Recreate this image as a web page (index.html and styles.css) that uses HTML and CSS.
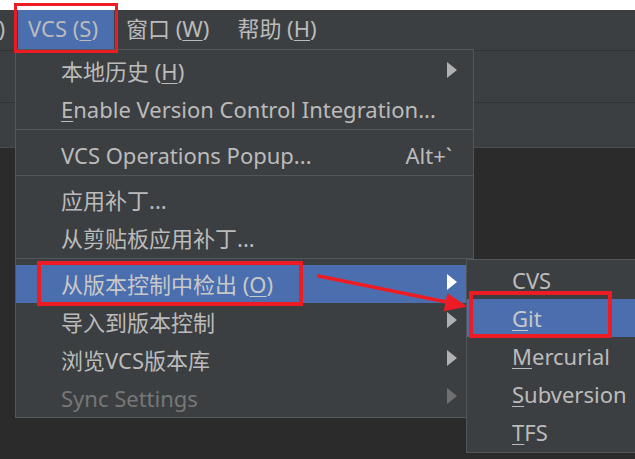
FILE: index.html
```html
<!DOCTYPE html>
<html lang="zh-CN">
<head>
<meta charset="utf-8">
<title>VCS menu</title>
<link rel="stylesheet" href="styles.css">
</head>
<body>
<div class="top-strip"></div>
<div class="menubar">
  <span class="mb-cut"><span>)</span></span>
  <span class="mb-item active">VCS (<u>S</u>)</span>
  <span class="mb-item">窗口 (<u>W</u>)</span>
  <span class="mb-item">帮助 (<u>H</u>)</span>
</div>
<div class="toolbar t1"></div>
<div class="toolbar t2"></div>
<div class="editor"></div>

<div class="popup main-menu">
  <div class="item"><span class="label">本地历史 (<u>H</u>)</span><svg class="tri" viewBox="0 0 10 16"><polygon points="0,0 10,8 0,16"/></svg></div>
  <div class="item"><span class="label"><u>E</u>nable Version Control Integration...</span></div>
  <div class="sep"></div>
  <div class="item"><span class="label">VCS Operations Popup...</span><span class="shortcut">Alt+`</span></div>
  <div class="sep"></div>
  <div class="item"><span class="label">应用补丁...</span></div>
  <div class="item"><span class="label">从剪贴板应用补丁...</span></div>
  <div class="sep"></div>
  <div class="item selected"><span class="label">从版本控制中检出 (<u>O</u>)</span><svg class="tri" viewBox="0 0 10 16"><polygon points="0,0 10,8 0,16"/></svg></div>
  <div class="item"><span class="label">导入到版本控制</span><svg class="tri" viewBox="0 0 10 16"><polygon points="0,0 10,8 0,16"/></svg></div>
  <div class="item"><span class="label">浏览VCS版本库</span><svg class="tri" viewBox="0 0 10 16"><polygon points="0,0 10,8 0,16"/></svg></div>
  <div class="item disabled"><span class="label">Sync Settings</span><svg class="tri" viewBox="0 0 10 16"><polygon points="0,0 10,8 0,16"/></svg></div>
</div>

<div class="popup sub-menu">
  <div class="item"><span class="label"><u>C</u>VS</span></div>
  <div class="item selected"><span class="label"><u>G</u>it</span></div>
  <div class="item"><span class="label"><u>M</u>ercurial</span></div>
  <div class="item"><span class="label"><u>S</u>ubversion</span></div>
  <div class="item"><span class="label"><u>T</u>FS</span></div>
</div>

<div class="mark mark-vcs"></div>
<div class="mark mark-checkout"></div>
<div class="mark mark-git"></div>
<svg class="annot-arrow" viewBox="0 0 635 459" width="635" height="459">
  <line x1="318.5" y1="276" x2="449" y2="302.5" stroke="#ed1c24" stroke-width="3.6" stroke-linecap="round"/>
  <polygon points="467.5,306.5 447.3,293.3 443.6,311.3" fill="#ed1c24"/>
</svg>
</body>
</html>
```
FILE: styles.css
```css
* { box-sizing: border-box; }
html, body {
  margin: 0;
  padding: 0;
}
body {
  width: 635px;
  height: 459px;
  overflow: hidden;
  position: relative;
  background: #2b2b2b;
  font-family: "Noto Sans", "Noto Sans CJK SC", sans-serif;
  font-size: 22px;
  color: #bbbbbb;
}
u {
  text-decoration: underline;
  text-decoration-thickness: 1px;
  text-underline-offset: 3px;
}
.top-strip {
  height: 10px;
  background: #ffffff;
}
.menubar {
  height: 41px;
  background: #3c3f41;
  border-bottom: 1px solid #323232;
  display: flex;
  white-space: nowrap;
}
.mb-cut {
  display: flex;
  justify-content: flex-end;
  width: 5px;
  margin-right: 13px;
  line-height: 37px;
}
.mb-item {
  padding: 0 16px 0 10px;
  margin-right: 2px;
  line-height: 37px;
  padding-bottom: 3px;
}
.mb-item.active {
  background: #4b6eaf;
}
.toolbar {
  background: #3c3f41;
  border-bottom: 1px solid #323232;
}
.t1 { height: 52px; }
.t2 { height: 45px; border-bottom-color: #4a4d4f; }
.editor {
  height: 320px;
  background: #2b2b2b;
}
.popup {
  position: absolute;
  background: #3c3f41;
  border: 1px solid #515658;
  white-space: nowrap;
}
.main-menu {
  left: 15px;
  top: 49px;
  width: 459px;
  height: 369px;
  padding-top: 2px;
}
.sub-menu {
  left: 466px;
  top: 259px;
  width: 200px;
  height: 194px;
  padding-top: 1px;
}
.item {
  height: 38px;
  display: flex;
  align-items: center;
  line-height: 38px;
}
.main-menu .item {
  padding: 0 16px 0 45px;
}
.sub-menu .item {
  padding: 0 10px 0 45px;
}
.item .label {
  flex: 1;
}
.item.selected {
  background: #4b6eaf;
  color: #c8c8c8;
}
.item.disabled {
  color: #777777;
}
.sep {
  height: 1px;
  margin: 1px 0 5.5px;
  background: #515658;
}
.shortcut {
  margin-right: 5px;
}
.tri {
  width: 10px;
  height: 16px;
  margin-top: -3px;
  fill: #afb1b3;
}
.item.selected .tri { fill: #ffffff; }
.item.disabled .tri { fill: #6e7072; }
.mark {
  position: absolute;
  border: 4px solid #ed1c24;
}
.mark-vcs {
  left: 14px;
  top: 3px;
  width: 104px;
  height: 50px;
  border-width: 3px;
}
.mark-checkout {
  left: 37px;
  top: 261px;
  width: 266px;
  height: 45px;
}
.mark-git {
  left: 469px;
  top: 291px;
  width: 143px;
  height: 47px;
}
.annot-arrow {
  position: absolute;
  left: 0;
  top: 0;
  pointer-events: none;
}
```
